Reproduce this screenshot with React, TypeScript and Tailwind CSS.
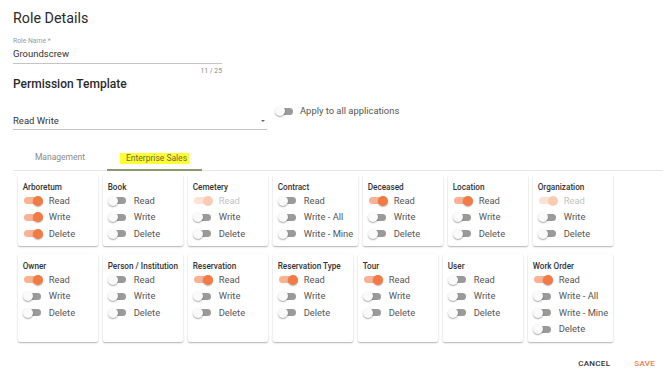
import React from "react";

type PermState = "on" | "off" | "dim";

type Card = {
  title: string;
  wide?: boolean;
  perms: [string, PermState][];
};

const cards: Card[] = [
  { title: "Arboretum", perms: [["Read", "on"], ["Write", "on"], ["Delete", "on"]] },
  { title: "Book", perms: [["Read", "off"], ["Write", "off"], ["Delete", "off"]] },
  { title: "Cemetery", perms: [["Read", "dim"], ["Write", "off"], ["Delete", "off"]] },
  { title: "Contract", wide: true, perms: [["Read", "off"], ["Write - All", "off"], ["Write - Mine", "off"]] },
  { title: "Deceased", perms: [["Read", "on"], ["Write", "off"], ["Delete", "off"]] },
  { title: "Location", perms: [["Read", "on"], ["Write", "off"], ["Delete", "off"]] },
  { title: "Organization", perms: [["Read", "dim"], ["Write", "off"], ["Delete", "off"]] },
  { title: "Owner", perms: [["Read", "on"], ["Write", "off"], ["Delete", "off"]] },
  { title: "Person / Institution", perms: [["Read", "off"], ["Write", "off"], ["Delete", "off"]] },
  { title: "Reservation", perms: [["Read", "on"], ["Write", "off"], ["Delete", "off"]] },
  { title: "Reservation Type", perms: [["Read", "on"], ["Write", "off"], ["Delete", "off"]] },
  { title: "Tour", perms: [["Read", "on"], ["Write", "off"], ["Delete", "off"]] },
  { title: "User", perms: [["Read", "off"], ["Write", "off"], ["Delete", "off"]] },
  {
    title: "Work Order",
    wide: true,
    perms: [["Read", "on"], ["Write - All", "off"], ["Write - Mine", "off"], ["Delete", "off"]],
  },
];

function Toggle({ state }: { state: PermState }) {
  const on = state !== "off";
  const track =
    state === "on" ? "bg-[#f9b293]" : state === "dim" ? "bg-[#fde1d4]" : "bg-[#9a9a9a]";
  const thumb =
    state === "on"
      ? "left-[10px] bg-[#f47a44] shadow-[0_1px_1.5px_rgba(0,0,0,0.3)]"
      : state === "dim"
        ? "left-[10px] bg-[#fbcab4]"
        : "left-0 bg-[#fafafa] shadow-[0_1px_1.5px_rgba(0,0,0,0.35)]";
  return (
    <span className="relative inline-block h-[10px] w-[20px] shrink-0" aria-checked={on}>
      <span className={`absolute left-[1.5px] top-[1.5px] h-[7px] w-[17px] rounded-full ${track}`} />
      <span className={`absolute top-0 h-[10px] w-[10px] rounded-full ${thumb}`} />
    </span>
  );
}

function PermCard({ card }: { card: Card }) {
  return (
    <div
      className={`${card.wide ? "w-[85.5px]" : "w-[80.5px]"} rounded-[2px] bg-white pb-[4px] pl-[5px] pt-[7px] shadow-[0_1px_2px_rgba(0,0,0,0.22),0_1px_1px_rgba(0,0,0,0.1)]`}
    >
      <div className="whitespace-nowrap text-[8.2px] font-medium leading-[11px] text-[#333]">{card.title}</div>
      {card.perms.map(([label, state]) => (
        <div key={label} className="flex h-[16.5px] items-center">
          <Toggle state={state} />
          <span
            className={`ml-[6px] whitespace-nowrap text-[9.4px] leading-[12px] ${state === "dim" ? "text-[#c2c2c2]" : "text-[#555]"}`}
          >
            {label}
          </span>
        </div>
      ))}
    </div>
  );
}

export default function App() {
  return (
    <div className="h-[377px] w-[670px] overflow-hidden bg-white pl-[13px] font-['Roboto',_'Liberation_Sans',_sans-serif]">
      <h1 className="pt-[9px] text-[14.3px] font-normal leading-[18px] text-[#2a2a2a]">Role Details</h1>

      <div className="mt-[10px] w-[209px]">
        <div className="text-[6.8px] leading-[8px] text-[#9a9a9a]">Role Name *</div>
        <div className="mt-[3px] text-[9.5px] leading-[12px] text-[#333]">Groundscrew</div>
        <div className="mt-[3px] h-px bg-[#c4c4c4]" />
        <div className="mt-[3px] text-right text-[6.8px] leading-[8px] text-[#8a8a8a]">11 / 25</div>
      </div>

      <h2 className="mt-[2px] text-[12px] font-medium leading-[14px] text-[#2a2a2a]">Permission Template</h2>

      <div className="mt-[14px] flex items-start">
        <div className="w-[254px] pt-[9.5px]">
          <div className="flex items-center justify-between pr-[2px]">
            <span className="text-[9.5px] leading-[12px] text-[#333]">Read Write</span>
            <span className="h-0 w-0 border-x-[2.5px] border-t-[2.5px] border-x-transparent border-t-[#666]" />
          </div>
          <div className="mt-[2.5px] h-px bg-[#c4c4c4]" />
        </div>
        <div className="ml-[7.5px] flex h-[12px] items-center">
          <Toggle state="off" />
          <span className="ml-[5.5px] text-[9.4px] leading-[12px] text-[#555]">Apply to all applications</span>
        </div>
      </div>

      <div className="mt-[15px] flex w-[650px] border-b border-[#e6e6e6]">
        <div className="-mb-px flex h-[26px] w-[94px] items-center justify-center pb-[2px] text-[8.5px] text-[#8a8a8a]">
          Management
        </div>
        <div className="-mb-px flex h-[26px] w-[95px] items-center justify-center border-b-2 border-[#8a9a6a] pt-[2px] text-[8.5px]">
          <span className="bg-[#ffff33] pl-[6px] pr-[2px] leading-[11px] text-[#6b6b40]">Enterprise Sales</span>
        </div>
      </div>

      <div className="ml-[4.7px] mt-[3.7px] flex w-[645px] flex-wrap gap-x-[4.5px] gap-y-[7.5px]">
        {cards.map((c) => (
          <PermCard key={c.title} card={c} />
        ))}
      </div>

      <div className="mt-[17px] flex justify-end gap-[24px] pr-[15px] text-[8px] font-medium uppercase leading-[10px] tracking-[0.3px]">
        <span className="text-[#333]">Cancel</span>
        <span className="text-[#f47a44]">Save</span>
      </div>
    </div>
  );
}
